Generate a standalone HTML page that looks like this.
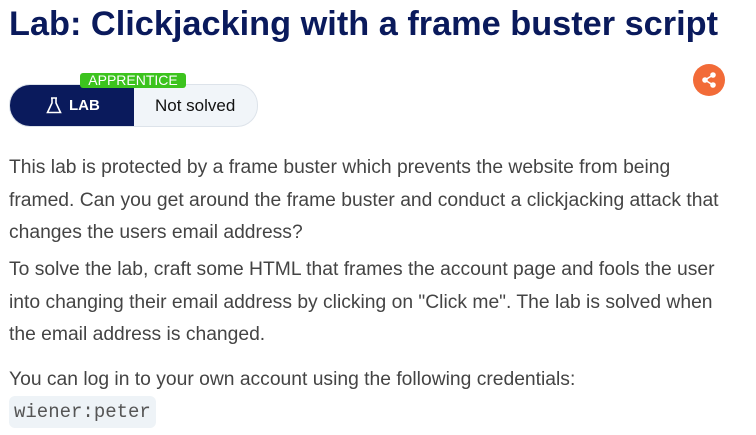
<!DOCTYPE html>
<html><head><style>
body{margin:0;background:#fff;font-family:"Liberation Sans",sans-serif;width:756px;height:435px;overflow:hidden;position:relative}
h1{position:absolute;left:9px;top:5px;margin:0;font-size:34.3px;font-weight:bold;color:#0a1a5c;white-space:nowrap}
.pill{position:absolute;left:9px;top:84px;width:247px;height:41px;border-radius:21px;border:1px solid #dde3ea;background:#f1f5f9;overflow:hidden}
.lab{position:absolute;left:0;top:0;width:124px;height:41px;background:#0a1a5c;color:#fff;font-weight:bold;font-size:15px;line-height:41px}
.lab span{position:absolute;left:59px}
.ns{position:absolute;left:145px;top:0;line-height:41px;font-size:17px;color:#111}
.app{position:absolute;left:80px;top:73px;width:106px;height:15px;background:#3cc31e;color:#fff;font-size:14px;line-height:15px;text-align:center;border-radius:3px}
.share{position:absolute;left:693px;top:64px;width:32px;height:32px;border-radius:50%;background:#f26b38}
p{position:absolute;left:9px;margin:0;font-size:19.3px;line-height:32.5px;color:#444;white-space:nowrap}
code{position:absolute;left:9px;top:396px;background:#eef3f7;border-radius:6px;padding:0 5px;font-family:"Liberation Mono",monospace;font-size:19px;line-height:32px;color:#555}
</style></head><body>
<h1>Lab: Clickjacking with a frame buster script</h1>
<div class="pill"><div class="lab"><svg style="position:absolute;left:36px;top:12px" width="16" height="17" viewBox="0 0 16 17" fill="none" stroke="#fff" stroke-width="1.6"><path d="M5 1h6M6 1v5L1.5 15.5h13L10 6V1"/></svg><span>LAB</span></div><div class="ns">Not solved</div></div>
<div class="app">APPRENTICE</div>
<div class="share"><svg width="32" height="32" viewBox="0 0 32 32" fill="none" stroke="#fff" stroke-width="1.6"><path d="M20 11l-8 5 8 5"/><circle cx="20" cy="11" r="2" fill="#fff"/><circle cx="12" cy="16" r="2" fill="#fff"/><circle cx="20" cy="21" r="2" fill="#fff"/></svg></div>
<p style="top:152px">This lab is protected by a frame buster which prevents the website from being<br>framed. Can you get around the frame buster and conduct a clickjacking attack that<br>changes the users email address?</p>
<p style="top:254px">To solve the lab, craft some HTML that frames the account page and fools the user<br>into changing their email address by clicking on "Click me". The lab is solved when<br>the email address is changed.</p>
<p style="top:364px">You can log in to your own account using the following credentials:</p>
<code>wiener:peter</code>
</body></html>
